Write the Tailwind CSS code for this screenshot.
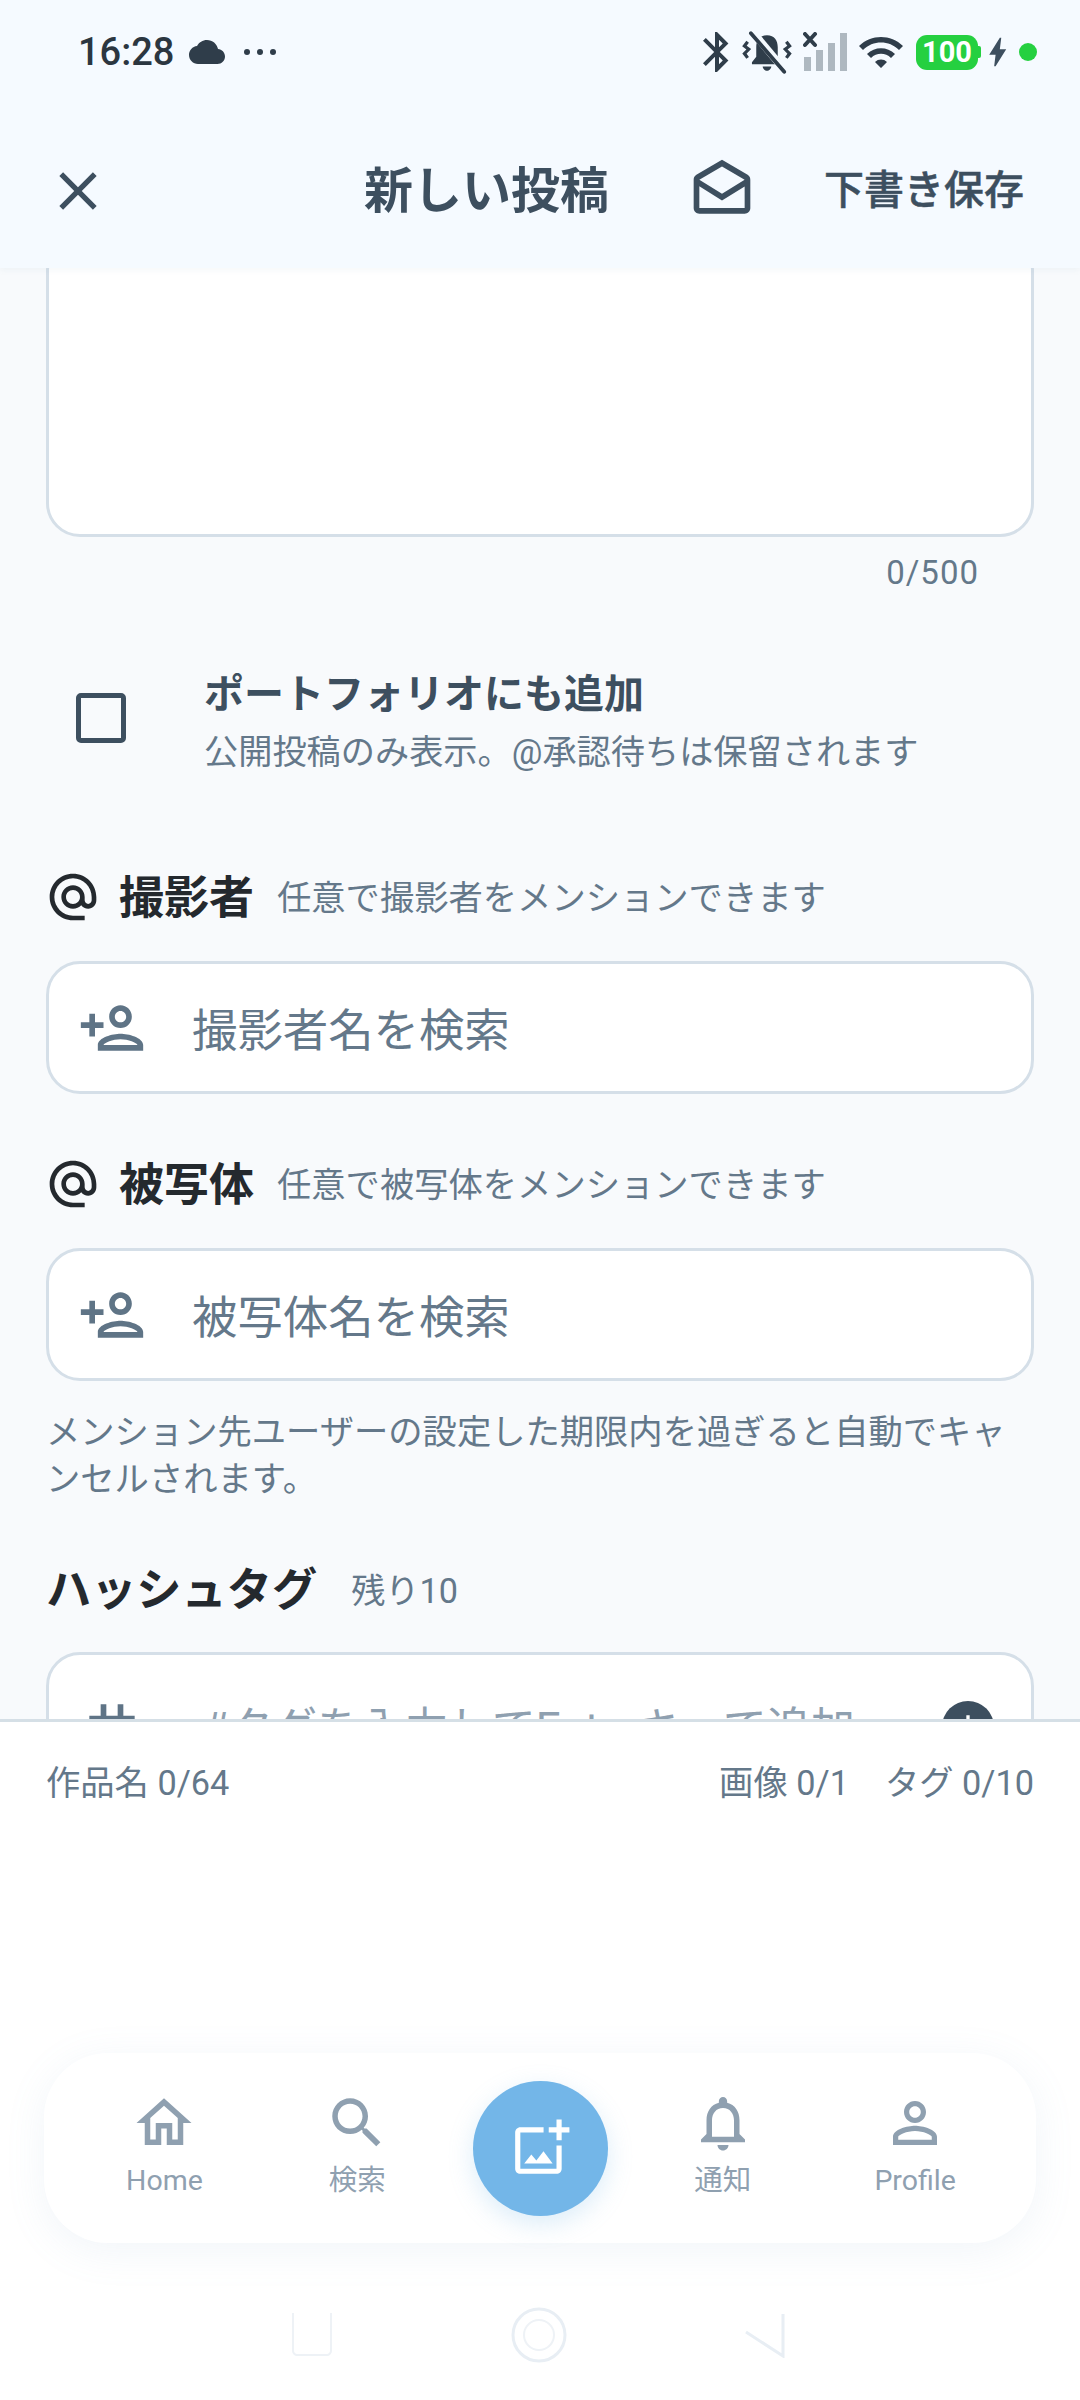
<!DOCTYPE html>
<html lang="ja">
  <head>
    <meta charset="UTF-8" />
    <meta name="viewport" content="width=device-width, initial-scale=1.0" />
    <title>新しい投稿</title>
    <script src="https://cdn.jsdelivr.net/npm/@tailwindcss/browser@4"></script>
  </head>
  <body class="bg-white font-['Roboto','Noto_Sans_CJK_JP',sans-serif]">
    <div class="w-[1080px] h-[2400px] flex flex-col overflow-hidden">
      <!-- status bar + app bar -->
      <header class="h-[268px] shrink-0 bg-[#f5faff] shadow-[0_2px_6px_rgba(120,150,180,0.08)] z-10">
        <div class="h-[104px] flex items-center pl-[78px] text-[#2b3640]">
          <span class="text-[38px] leading-none font-medium">16:28</span>
          <svg class="w-[36px] h-[36px] ml-[15px] fill-[#2f3d4a]" viewBox="0 0 24 24"><path d="M19.35 10.04C18.67 6.59 15.64 4 12 4 9.11 4 6.6 5.64 5.35 8.04 2.34 8.36 0 10.91 0 14c0 3.31 2.69 6 6 6h13c2.76 0 5-2.24 5-5 0-2.64-2.05-4.78-4.65-4.96z"/></svg>
          <div class="flex gap-[7px] ml-[19px]">
            <i class="w-[6px] h-[6px] rounded-full bg-[#2f3d4a]"></i>
            <i class="w-[6px] h-[6px] rounded-full bg-[#2f3d4a]"></i>
            <i class="w-[6px] h-[6px] rounded-full bg-[#2f3d4a]"></i>
          </div>
          <div class="ml-auto flex items-center pr-[43px]">
            <svg class="w-[48px] h-[48px] fill-[#2f3d4a]" viewBox="0 0 24 24"><path d="M17.71 7.71L12 2h-1v7.59L6.41 5 5 6.41 10.59 12 5 17.59 6.41 19 11 14.41V22h1l5.71-5.71-4.3-4.29 4.3-4.29zM13 5.83l1.88 1.88L13 9.59V5.83zm1.88 10.46L13 18.17v-3.76l1.88 1.88z"/></svg>
            <svg class="w-[50px] h-[43px] ml-[1px]" viewBox="0 0 46 40"><path fill="#2f3d4a" d="M23 4c-7 0-10 5-10 11v9l-4 5v2h28v-2l-4-5v-9c0-6-3-11-10-11zM19 33h8c0 2-2 4-4 4s-4-2-4-4z"/><path stroke="#f5faff" stroke-width="7" d="M9 0l30 36"/><path stroke="#2f3d4a" stroke-width="3.5" stroke-linecap="round" d="M8 2l31 36"/><path fill="none" stroke="#2f3d4a" stroke-width="3" d="M5 10l-3 4 4 3-4 4 3 4M41 10l3 4-4 3 4 4-3 4"/></svg>
            <svg class="w-[44px] h-[40px] ml-[11px]" viewBox="0 0 44 40"><path fill="#aeb8c0" d="M1 25h7v14H1zM13 18h7v21h-7zM25 11h7v28h-7zM37 1h7v38h-7z"/><path stroke="#2f3d4a" stroke-width="4" stroke-linecap="round" d="M2 2l10 11M12 2L2 13"/></svg>
            <svg class="w-[48px] h-[48px] ml-[10px] fill-[#2f3d4a]" viewBox="0 0 24 24"><path d="M1 9l2 2c4.97-4.97 13.03-4.97 18 0l2-2C16.93 2.93 7.08 2.93 1 9zm8 8l3 3 3-3c-1.65-1.66-4.34-1.66-6 0zm-4-4l2 2c2.76-2.76 7.24-2.76 10 0l2-2C15.14 9.14 8.87 9.14 5 13z"/></svg>
            <div class="flex items-center ml-[11px]">
              <span class="w-[62px] h-[35px] rounded-[11px] bg-[#25d040] text-white text-[29px] leading-[35px] font-bold text-center">100</span>
              <i class="w-[3px] h-[12px] rounded-r-[2px] bg-[#25d040]"></i>
            </div>
            <svg class="w-[34px] h-[36px] -ml-[1px] fill-[#3d4f5f]" viewBox="0 0 24 24"><path d="M11 22h-1l1-8H6.5L14 2h1l-1 8h4.5z"/></svg>
            <i class="w-[18px] h-[18px] rounded-full bg-[#25d040] ml-[5px]"></i>
          </div>
        </div>
        <div class="h-[164px] flex items-center text-[#3d4f5f] pt-[10px]">
          <svg class="w-[64px] h-[64px] ml-[46px] fill-[#3d4f5f]" viewBox="0 0 24 24"><path d="M19 6.41L17.59 5 12 10.59 6.41 5 5 6.41 10.59 12 5 17.59 6.41 19 12 13.41 17.59 19 19 17.59 13.41 12z"/></svg>
          <h1 class="ml-[254px] text-[49px] leading-none font-bold">新しい投稿</h1>
          <svg class="w-[68px] h-[68px] ml-[79px] fill-[#3d4f5f]" viewBox="0 0 24 24"><path d="M21.99 8c0-.72-.37-1.35-.94-1.7L12 1 2.95 6.3C2.38 6.65 2 7.28 2 8v10c0 1.1.9 2 2 2h16c1.1 0 2-.9 2-2l-.01-10zm-2 0v.01L12 13 4 8l8-4.68L19.99 8zM4 18v-7.66l8 5.02 7.99-4.99L20 18H4z"/></svg>
          <span class="ml-[68px] text-[40px] leading-none font-medium [-webkit-text-stroke:0.5px]">下書き保存</span>
        </div>
      </header>

      <!-- scrolled form -->
      <main class="h-[1451px] shrink-0 overflow-hidden bg-[#f8fafc] px-[46px]">
        <div class="h-[300px] -mt-[31px] bg-white border-[3px] border-[#d5dfe8] rounded-[34px]"></div>
        <p class="mt-[14px] pr-[55px] text-right text-[33px] leading-[44px] tracking-[1px] text-[#64788a]">0/500</p>

        <label class="mt-[75px] flex items-start">
          <span class="ml-[30px] mt-[23px] w-[50px] h-[50px] border-[5px] border-[#3d4f5f] rounded-[5px] shrink-0"></span>
          <span class="ml-[78px]">
            <span class="block text-[40px] leading-[50px] font-bold text-[#3d4f5f]">ポートフォリオにも追加</span>
            <span class="block mt-[7px] text-[34.2px] leading-[50px] text-[#64788a]">公開投稿のみ表示。@承認待ちは保留されます</span>
          </span>
        </label>

        <div class="mt-[90px] h-[60px] flex items-center">
          <svg class="w-[56px] h-[56px] -ml-[1px] fill-[#24292e]" viewBox="0 0 24 24"><path d="M12 2C6.48 2 2 6.48 2 12s4.48 10 10 10h5v-2h-5c-4.34 0-8-3.66-8-8s3.66-8 8-8 8 3.66 8 8v1.43c0 .79-.71 1.57-1.5 1.57s-1.5-.78-1.5-1.57V12c0-2.76-2.24-5-5-5s-5 2.24-5 5 2.24 5 5 5c1.38 0 2.64-.56 3.54-1.47.65.89 1.77 1.47 2.96 1.47 1.97 0 3.5-1.6 3.5-3.57V12c0-5.52-4.48-10-10-10zm0 13c-1.66 0-3-1.34-3-3s1.34-3 3-3 3 1.34 3 3-1.34 3-3 3z"/></svg>
          <span class="ml-[18px] mt-[3px] text-[45px] leading-none font-bold text-[#24292e]">撮影者</span>
          <span class="ml-[23px] mt-[3px] text-[34.3px] leading-none text-[#64788a]">任意で撮影者をメンションできます</span>
        </div>
        <div class="mt-[34px] h-[133px] flex items-center bg-white border-[3px] border-[#d5dfe8] rounded-[34px]">
          <svg class="w-[68px] h-[68px] ml-[29px] fill-[#5f7486]" viewBox="0 0 24 24"><path d="M15 12c2.21 0 4-1.79 4-4s-1.79-4-4-4-4 1.79-4 4 1.79 4 4 4zm0-6c1.1 0 2 .9 2 2s-.9 2-2 2-2-.9-2-2 .9-2 2-2zm0 8c-2.67 0-8 1.34-8 4v2h16v-2c0-2.66-5.33-4-8-4zm-6 4c.22-.72 3.31-2 6-2 2.7 0 5.8 1.29 6 2H9zm-3-3v-3h3v-2H6V7H4v3H1v2h3v3z"/></svg>
          <span class="ml-[46px] mt-[8px] text-[45.4px] leading-none text-[#64788a]">撮影者名を検索</span>
        </div>

        <div class="mt-[60px] h-[60px] flex items-center">
          <svg class="w-[56px] h-[56px] -ml-[1px] fill-[#24292e]" viewBox="0 0 24 24"><path d="M12 2C6.48 2 2 6.48 2 12s4.48 10 10 10h5v-2h-5c-4.34 0-8-3.66-8-8s3.66-8 8-8 8 3.66 8 8v1.43c0 .79-.71 1.57-1.5 1.57s-1.5-.78-1.5-1.57V12c0-2.76-2.24-5-5-5s-5 2.24-5 5 2.24 5 5 5c1.38 0 2.64-.56 3.54-1.47.65.89 1.77 1.47 2.96 1.47 1.97 0 3.5-1.6 3.5-3.57V12c0-5.52-4.48-10-10-10zm0 13c-1.66 0-3-1.34-3-3s1.34-3 3-3 3 1.34 3 3-1.34 3-3 3z"/></svg>
          <span class="ml-[18px] mt-[3px] text-[45px] leading-none font-bold text-[#24292e]">被写体</span>
          <span class="ml-[23px] mt-[3px] text-[34.3px] leading-none text-[#64788a]">任意で被写体をメンションできます</span>
        </div>
        <div class="mt-[34px] h-[133px] flex items-center bg-white border-[3px] border-[#d5dfe8] rounded-[34px]">
          <svg class="w-[68px] h-[68px] ml-[29px] fill-[#5f7486]" viewBox="0 0 24 24"><path d="M15 12c2.21 0 4-1.79 4-4s-1.79-4-4-4-4 1.79-4 4 1.79 4 4 4zm0-6c1.1 0 2 .9 2 2s-.9 2-2 2-2-.9-2-2 .9-2 2-2zm0 8c-2.67 0-8 1.34-8 4v2h16v-2c0-2.66-5.33-4-8-4zm-6 4c.22-.72 3.31-2 6-2 2.7 0 5.8 1.29 6 2H9zm-3-3v-3h3v-2H6V7H4v3H1v2h3v3z"/></svg>
          <span class="ml-[46px] mt-[8px] text-[45.4px] leading-none text-[#64788a]">被写体名を検索</span>
        </div>
        <p class="mt-[28px] text-[34.3px] leading-[47px] text-[#64788a]">メンション先ユーザーの設定した期限内を過ぎると自動でキャンセルされます。</p>

        <div class="mt-[58px] h-[60px] flex items-center">
          <span class="text-[45.2px] leading-none font-bold text-[#24292e]">ハッシュタグ</span>
          <span class="ml-[34px] text-[34.2px] leading-none text-[#64788a]">残り10</span>
        </div>
        <div class="mt-[31px] h-[133px] flex items-center bg-white border-[3px] border-[#d5dfe8] rounded-[34px] pt-[16px]">
          <svg class="w-[68px] h-[68px] ml-[29px] fill-[#5f7486]" viewBox="0 0 24 24"><path d="M20 10V8h-4V4h-2v4h-4V4H8v4H4v2h4v4H4v2h4v4h2v-4h4v4h2v-4h4v-2h-4v-4h4zm-6 4h-4v-4h4v4z"/></svg>
          <span class="ml-[56px] mt-[5px] text-[44px] leading-none text-[#8fa0b0]">#タグを入力してEnterキーで追加</span>
          <span class="ml-auto mr-[37px] w-[52px] h-[52px] rounded-full bg-[#3d4f5f] flex items-center justify-center">
            <svg class="w-[40px] h-[40px] fill-white" viewBox="0 0 24 24"><path d="M19 13h-6v6h-2v-6H5v-2h6V5h2v6h6v2z"/></svg>
          </span>
        </div>
      </main>

      <!-- counters + nav -->
      <footer class="flex-1 bg-white border-t-[3px] border-[#d5dfe6] z-10">
        <div class="mt-[39px] px-[46px] flex text-[#64788a] text-[34.3px] leading-[44px]">
          <span>作品名 0/64</span>
          <span class="ml-auto">画像 0/1</span>
          <span class="ml-[36px]">タグ 0/10</span>
        </div>

        <nav class="mt-[248px] mx-[44px] w-[992px] h-[190px] px-[24px] rounded-[64px] bg-white shadow-[0_8px_40px_rgba(120,160,200,0.10)] flex items-center text-[#8fa0b0] text-[28.5px] leading-none">
          <a class="w-[193px] pb-[10px] flex flex-col items-center">
            <svg class="w-[66px] h-[66px] fill-[#8fa0b0]" viewBox="0 0 24 24"><path d="M12 5.69l5 4.5V18h-2v-6H9v6H7v-7.81l5-4.5M12 3L2 12h3v8h6v-6h2v6h6v-8h3L12 3z"/></svg>
            <span class="mt-[11px]">Home</span>
          </a>
          <a class="w-[193px] pb-[10px] flex flex-col items-center">
            <svg class="w-[66px] h-[66px] fill-[#8fa0b0]" viewBox="0 0 24 24"><path d="M15.5 14h-.79l-.28-.27C15.41 12.59 16 11.11 16 9.5 16 5.91 13.09 3 9.5 3S3 5.91 3 9.5 5.91 16 9.5 16c1.61 0 3.09-.59 4.23-1.57l.27.28v.79l5 4.99L20.49 19l-4.99-5zm-6 0C7.01 14 5 11.99 5 9.5S7.01 5 9.5 5 14 7.01 14 9.5 11.99 14 9.5 14z"/></svg>
            <span class="mt-[11px]">検索</span>
          </a>
          <div class="w-[174px] flex justify-center">
            <button class="w-[135px] h-[135px] rounded-full bg-[#73b6e8] flex items-center justify-center shadow-[0_8px_24px_rgba(115,182,232,0.25)]">
              <svg class="w-[62px] h-[62px] fill-white" viewBox="0 0 24 24"><path d="M18 20H4V6h9V4H4c-1.1 0-2 .9-2 2v14c0 1.1.9 2 2 2h14c1.1 0 2-.9 2-2v-9h-2v9zm-7.79-3.17l-1.96-2.36L5.5 18h11l-3.54-4.71zM20 4V1h-2v3h-3c.01.01 0 2 0 2h3v2.99c.01.01 2 0 2 0V6h3V4h-3z"/></svg>
            </button>
          </div>
          <a class="w-[191px] pb-[10px] flex flex-col items-center">
            <svg class="w-[66px] h-[66px] fill-[#8fa0b0]" viewBox="0 0 24 24"><path d="M12 22c1.1 0 2-.9 2-2h-4c0 1.1.9 2 2 2zm6-6v-5c0-3.07-1.63-5.64-4.5-6.32V4c0-.83-.67-1.5-1.5-1.5s-1.5.67-1.5 1.5v.68C7.64 5.36 6 7.92 6 11v5l-2 2v1h16v-1l-2-2zm-2 1H8v-6c0-2.48 1.51-4.5 4-4.5s4 2.02 4 4.5v6z"/></svg>
            <span class="mt-[11px]">通知</span>
          </a>
          <a class="w-[194px] pb-[10px] flex flex-col items-center">
            <svg class="w-[66px] h-[66px] fill-[#8fa0b0]" viewBox="0 0 24 24"><path d="M12 5.9c1.16 0 2.1.94 2.1 2.1s-.94 2.1-2.1 2.1S9.9 9.16 9.9 8s.94-2.1 2.1-2.1m0 9c2.97 0 6.1 1.46 6.1 2.1v1.1H5.9V17c0-.64 3.13-2.1 6.1-2.1M12 4C9.79 4 8 5.79 8 8s1.79 4 4 4 4-1.79 4-4-1.79-4-4-4zm0 9c-2.67 0-8 1.34-8 4v3h16v-3c0-2.66-5.33-4-8-4z"/></svg>
            <span class="mt-[11px]">Profile</span>
          </a>
        </nav>

        <!-- system nav buttons, almost white on white -->
        <div class="mt-[64px] pl-[290px] flex items-center">
          <svg class="w-[46px] h-[46px]" viewBox="0 0 46 46"><path fill="#ffffff" stroke="#eef2f6" stroke-width="2" d="M3 1v38c0 2 2 4 4 4h30c2 0 4-2 4-4V1"/></svg>
          <svg class="w-[56px] h-[56px] ml-[175px]" viewBox="0 0 56 56"><circle cx="28" cy="28" r="26" fill="none" stroke="#e8eef4" stroke-width="3"/><circle cx="28" cy="28" r="15" fill="none" stroke="#eef2f6" stroke-width="2"/></svg>
          <svg class="w-[42px] h-[46px] ml-[177px]" viewBox="0 0 42 46"><path fill="none" stroke="#e8eef4" stroke-width="3" d="M2 20l37 24V2"/></svg>
        </div>
      </footer>
    </div>
  </body>
</html>
